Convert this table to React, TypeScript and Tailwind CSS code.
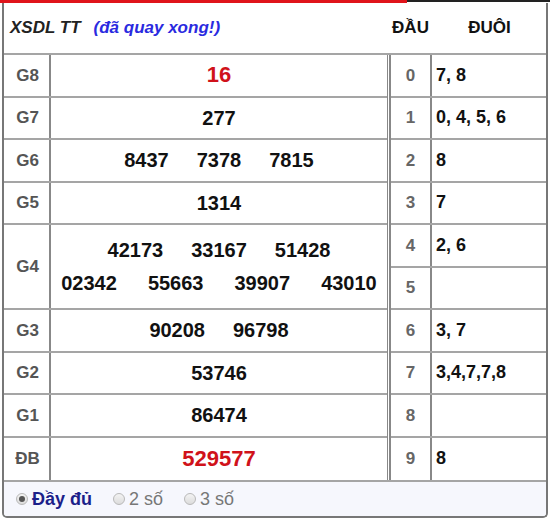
import React from 'react';

const font = { fontFamily: '"Liberation Sans", Arial, sans-serif' };

type Prize = { label: string; lines: string[][]; red?: boolean; tall?: boolean };

const prizes: Prize[] = [
  { label: 'G8', lines: [['16']], red: true },
  { label: 'G7', lines: [['277']] },
  { label: 'G6', lines: [['8437', '7378', '7815']] },
  { label: 'G5', lines: [['1314']] },
  { label: 'G4', lines: [['42173', '33167', '51428'], ['02342', '55663', '39907', '43010']], tall: true },
  { label: 'G3', lines: [['90208', '96798']] },
  { label: 'G2', lines: [['53746']] },
  { label: 'G1', lines: [['86474']] },
  { label: 'ĐB', lines: [['529577']], red: true },
];

const tails = ['7, 8', '0, 4, 5, 6', '8', '7', '2, 6', '', '3, 7', '3,4,7,7,8', '', '8'];

const Radio = ({ checked }: { checked?: boolean }) => (
  <span className="w-[12px] h-[12px] rounded-full border border-[#b9b9b9] bg-gradient-to-b from-[#f3f3f3] to-[#dcdcdc] flex items-center justify-center">
    {checked && <span className="w-[6px] h-[6px] rounded-full bg-[#555]" />}
  </span>
);

export default function App() {
  return (
    <div className="w-[550px] h-[520px] bg-white" style={font}>
      <div className="flex h-[3px]">
        <div className="w-[407px] h-[3px] bg-[#e0141b]" />
        <div className="flex-1 h-[2px] bg-[#222]" />
      </div>
      <div className="mx-[2px] h-[515px] border-x-2 border-b-2 border-[#777] rounded-b-[5px] overflow-hidden flex flex-col">
        {/* header */}
        <div className="h-[52px] flex items-center border-b-2 border-[#a5a5a5]">
          <div className="w-[384px] pl-[6px] flex items-center italic font-bold">
            <span className="text-[17px] text-[#222]">XSDL TT</span>
            <span className="ml-[13px] text-[17px] text-[#2a2ae0]">(đã quay xong!)</span>
          </div>
          <div className="w-[45px] text-center font-bold text-[17px] text-[#111]">ĐẦU</div>
          <div className="flex-1 text-center font-bold text-[17px] text-[#111]">ĐUÔI</div>
        </div>

        <div className="flex h-[425px]">
          {/* left table */}
          <div className="w-[384px] flex flex-col border-r border-[#888]">
            {prizes.map((p) => (
              <div
                key={p.label}
                className={`flex border-b-2 border-[#a5a5a5] ${p.tall ? 'h-[85px]' : 'h-[42.5px]'} last:border-b-0`}
              >
                <div className="w-[47px] border-r-2 border-[#888] flex items-center justify-center pl-[2px] text-[17px] font-bold text-[#555]">
                  {p.label}
                </div>
                <div className="flex-1 flex flex-col justify-center items-center gap-[9px]">
                  {p.lines.map((line, i) => (
                    <div
                      key={i}
                      className={`flex justify-center ${i === 1 ? 'gap-[31px]' : 'gap-[28px]'} font-bold ${
                        p.red ? 'text-[22px] text-[#d0121a]' : 'text-[20px] text-[#111]'
                      } leading-[24px]`}
                    >
                      {line.map((n) => (
                        <span key={n}>{n}</span>
                      ))}
                    </div>
                  ))}
                </div>
              </div>
            ))}
          </div>

          {/* right table */}
          <div className="ml-[1px] flex-1 flex flex-col border-l-2 border-[#888]">
            {tails.map((t, i) => (
              <div key={i} className="h-[42.5px] flex border-b-2 border-[#a5a5a5] last:border-b-0">
                <div className="w-[41px] border-r-2 border-[#888] flex items-center justify-center text-[17px] font-bold text-[#666]">
                  {i}
                </div>
                <div className="flex-1 pl-[4px] flex items-center text-[18px] font-bold text-[#111]">{t}</div>
              </div>
            ))}
          </div>
        </div>

        {/* footer */}
        <div className="flex-1 border-t-2 border-[#a5a5a5] bg-[#f6f7fd] flex items-center pl-[12px] text-[18px]">
          <label className="flex items-center gap-[4px]">
            <Radio checked />
            <span className="font-bold text-[#1c1f8a]">Đầy đủ</span>
          </label>
          <label className="flex items-center gap-[4px] ml-[21px] text-[#777]">
            <Radio />
            <span>2 số</span>
          </label>
          <label className="flex items-center gap-[4px] ml-[21px] text-[#777]">
            <Radio />
            <span>3 số</span>
          </label>
        </div>
      </div>
    </div>
  );
}
